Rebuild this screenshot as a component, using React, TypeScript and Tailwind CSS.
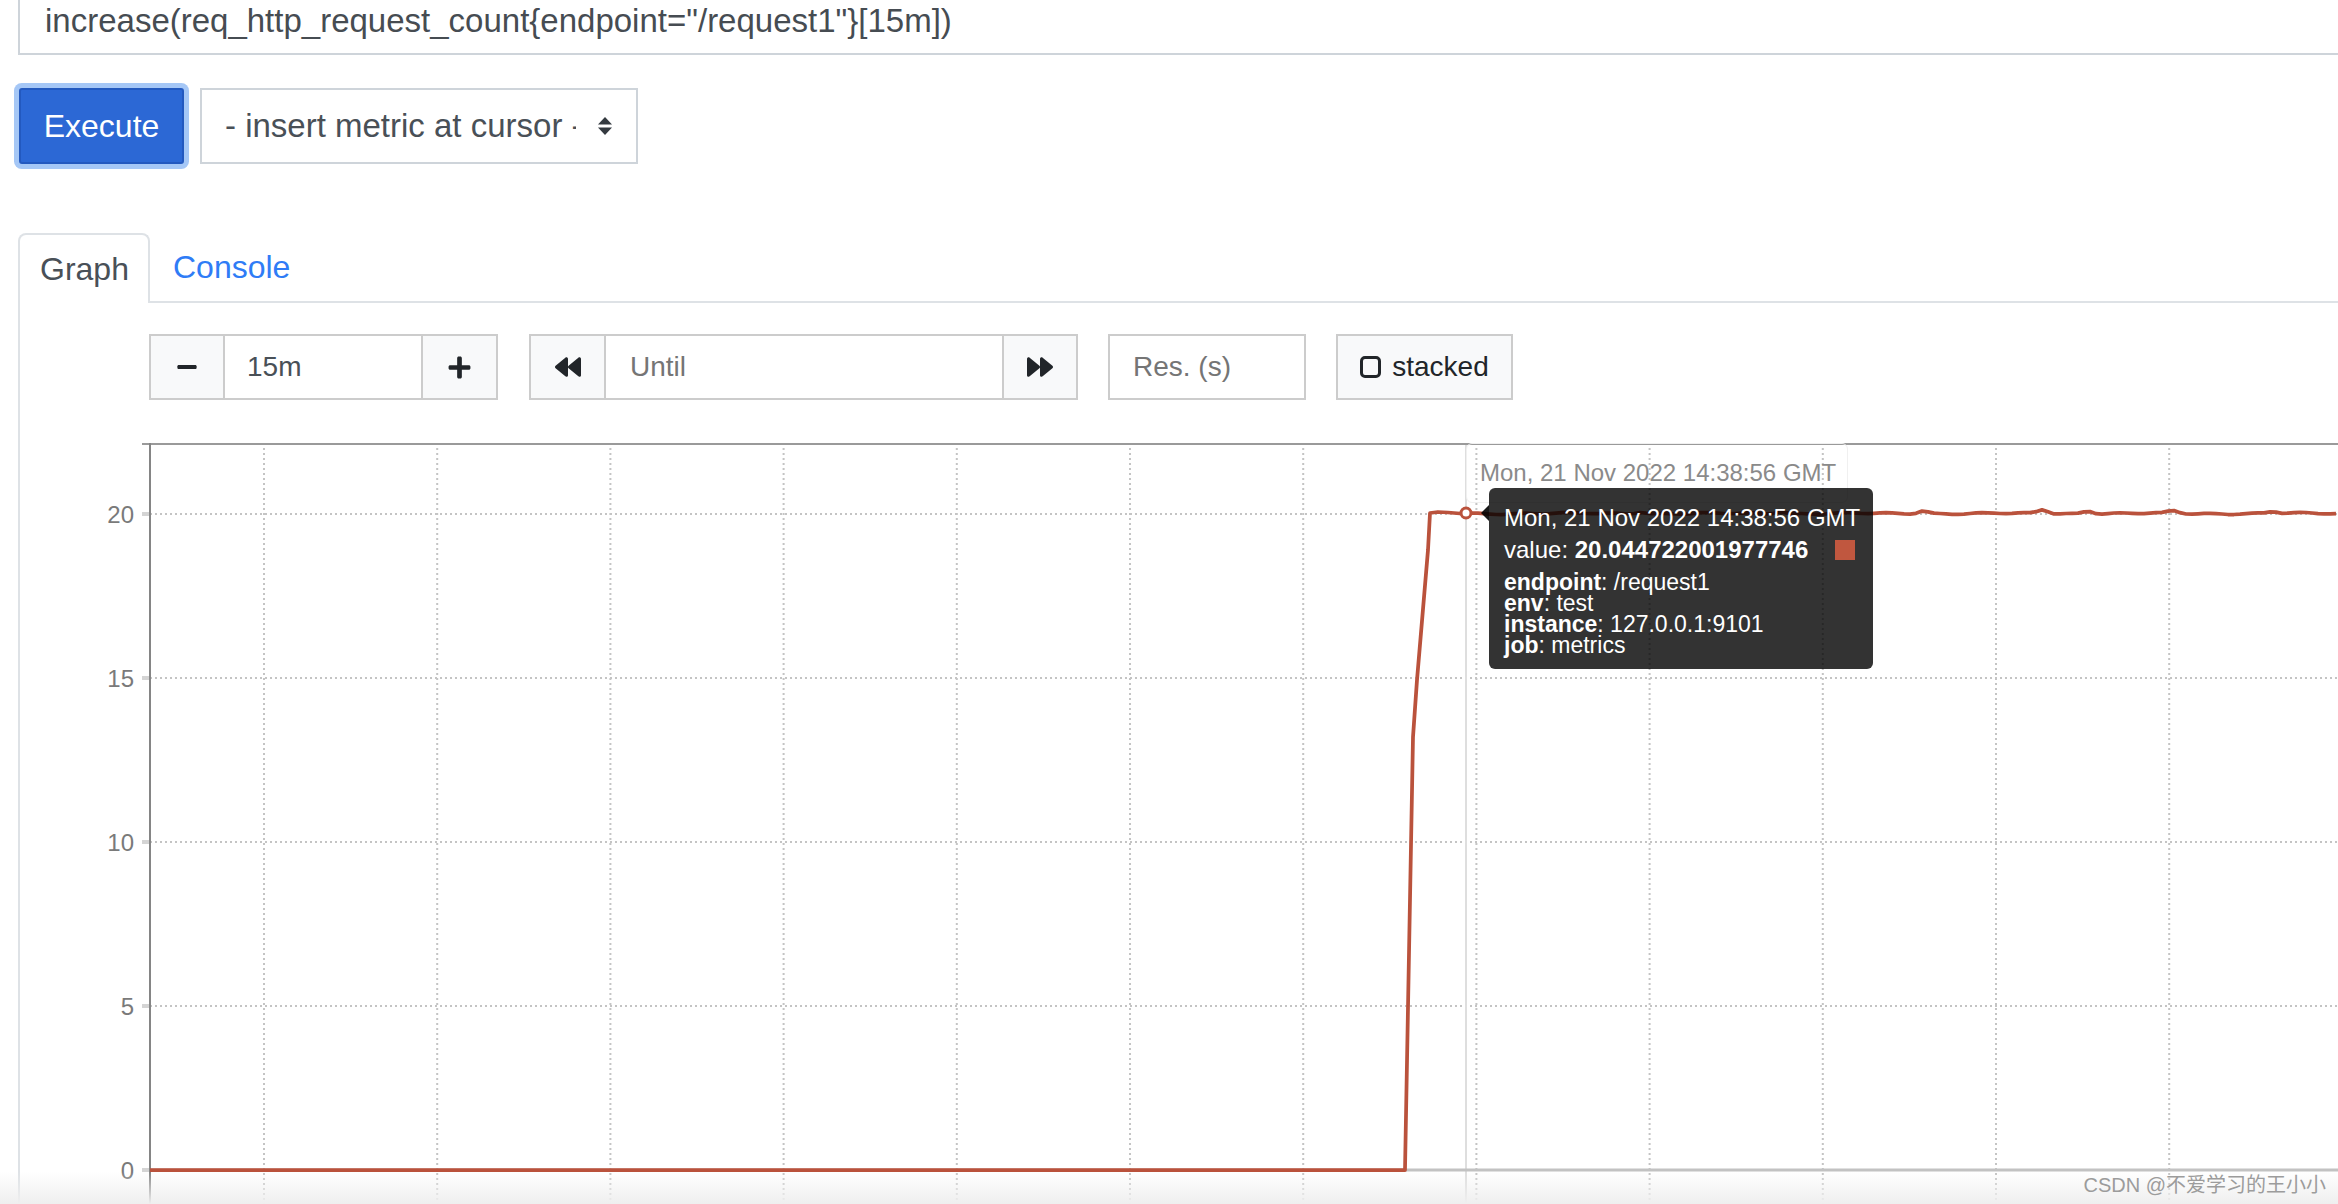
import React from "react";
import { FaMinus, FaPlus, FaBackward, FaForward } from "react-icons/fa";

const SERIES = "#ba523c";

function buildSeries(): string {
  const pts: [number, number][] = [
    [130, 727],
    [1385, 727],
    [1393, 294],
    [1397, 237],
    [1408, 107],
    [1410, 70],
    [1418, 69],
    [1428, 69.5],
    [1440, 70.5],
    [1446, 70],
  ];
  const bumps: [number, number][] = [
    [1903, 3],
    [2023, 4],
    [2068, 3],
    [2153, 2.5],
    [2253, 2],
    [1620, 2],
    [1760, 2.5],
  ];
  for (let x = 1452; x <= 2320; x += 6) {
    let y = 70.5 + Math.sin(x / 7.3) * 0.6 + Math.sin(x / 23) * 0.5;
    for (const [bx, a] of bumps) {
      y -= a * Math.exp(-Math.pow((x - bx) / 7, 2));
    }
    pts.push([x, Math.round(y * 10) / 10]);
  }
  return pts.map(([x, y], i) => `${i === 0 ? "M" : "L"}${x} ${y}`).join(" ");
}

function Chart() {
  const vx = Array.from({ length: 12 }, (_, k) => 244 + 173.2 * k);
  const ticks: [string, number][] = [
    ["20", 71],
    ["15", 235],
    ["10", 399],
    ["5", 563],
    ["0", 727],
  ];
  const d = buildSeries();
  return (
    <svg width={2318} height={761} className="block">
      {vx.map((x) => (
        <line key={x} x1={x} x2={x} y1={0} y2={761} stroke="#c4c4c4" strokeWidth={2} strokeDasharray="2 3" />
      ))}
      {ticks.slice(0, 4).map(([, y]) => (
        <line key={y} x1={130} x2={2318} y1={y} y2={y} stroke="#c4c4c4" strokeWidth={2} strokeDasharray="2 3" />
      ))}
      <line x1={1446} x2={1446} y1={0} y2={761} stroke="#dedede" strokeWidth={2} />
      <line x1={130} x2={2318} y1={727} y2={727} stroke="#c2c2c2" strokeWidth={3} />
      <line x1={122} x2={2318} y1={1} y2={1} stroke="#9a9a9a" strokeWidth={2} />
      <line x1={130} x2={130} y1={0} y2={761} stroke="#858585" strokeWidth={2} />
      {ticks.map(([t, y]) => (
        <g key={t}>
          <line x1={122} x2={129} y1={y} y2={y} stroke="#d4d4d4" strokeWidth={4} />
          <text x={114} y={y} textAnchor="end" dominantBaseline="central" fontSize={24} fill="#7a7a7a">
            {t}
          </text>
        </g>
      ))}
      <path d={d} fill="none" stroke={SERIES} strokeWidth={3.75} strokeLinejoin="round" />
      <circle cx={1446} cy={70} r={5} fill="#ffffff" stroke={SERIES} strokeWidth={3} />
    </svg>
  );
}

function SelectArrows() {
  return (
    <svg width={16} height={20} viewBox="0 0 16 20" className="shrink-0">
      <polygon points="1,8.5 8,1 15,8.5" fill="#343a40" />
      <polygon points="1,11.5 15,11.5 8,19" fill="#343a40" />
    </svg>
  );
}

export default function App() {
  return (
    <div className="relative w-[2338px] h-[1204px] overflow-hidden bg-white flex flex-col font-['Liberation_Sans','Noto_Sans_CJK_SC',sans-serif]">
      {/* query box */}
      <div className="shrink-0 h-[55px] ml-[18px] border-l-2 border-b-2 border-[#ced4da] pl-[25px] text-[33px] leading-[42px] text-[#464c52] whitespace-nowrap">
        increase(req_http_request_count{"{"}endpoint="/request1"{"}"}[15m])
      </div>

      {/* execute row */}
      <div className="shrink-0 mt-[33px] ml-[19px] flex items-center gap-[16px]">
        <button className="h-[76px] w-[165px] bg-[#2c68d5] border-2 border-[#2359bf] text-white text-[32px] rounded-[3px] ring-[5px] ring-[#a5c7f6] flex items-center justify-center">
          Execute
        </button>
        <div className="h-[76px] w-[438px] border-2 border-[#ced4da] flex items-center pl-[23px]">
          <span className="w-[351px] overflow-hidden whitespace-nowrap text-[33px] text-[#495057] leading-[40px]">
            - insert metric at cursor -
          </span>
          <div className="ml-[21px]">
            <SelectArrows />
          </div>
        </div>
      </div>

      {/* tabs */}
      <div className="shrink-0 mt-[69px] ml-[18px] flex h-[70px]">
        <div className="w-[132px] h-[70px] border-2 border-b-0 border-[#dee2e6] rounded-t-[8px] pl-[20px] flex items-center text-[32px] text-[#495057]">
          Graph
        </div>
        <div className="flex-1 border-b-2 border-[#dee2e6] flex items-center pl-[23px] text-[32px] text-[#2f7cf6]">
          Console
        </div>
      </div>

      {/* tab panel */}
      <div className="flex-1 min-h-0 ml-[18px] border-l-2 border-[#dee2e6] flex flex-col">
        {/* controls */}
        <div className="shrink-0 mt-[31px] pl-[129px] flex h-[66px] text-[28px]">
          <div className="h-[66px] w-[76px] bg-[#f8f9fa] border-2 border-[#cccccc] flex items-center justify-center text-[#212529]">
            <FaMinus size={22} />
          </div>
          <div className="-ml-[2px] h-[66px] w-[200px] border-2 border-[#cccccc] pl-[22px] flex items-center text-[#495057]">
            15m
          </div>
          <div className="-ml-[2px] h-[66px] w-[77px] bg-[#f8f9fa] border-2 border-[#cccccc] flex items-center justify-center text-[#212529]">
            <FaPlus size={25} />
          </div>

          <div className="ml-[31px] h-[66px] w-[77px] bg-[#f8f9fa] border-2 border-[#cccccc] flex items-center justify-center text-[#212529]">
            <FaBackward size={26} />
          </div>
          <div className="-ml-[2px] h-[66px] w-[400px] border-2 border-[#cccccc] pl-[24px] flex items-center text-[#757575]">
            Until
          </div>
          <div className="-ml-[2px] h-[66px] w-[76px] bg-[#f8f9fa] border-2 border-[#cccccc] flex items-center justify-center text-[#212529]">
            <FaForward size={26} />
          </div>

          <div className="ml-[30px] h-[66px] w-[198px] border-2 border-[#cccccc] pl-[23px] flex items-center text-[#757575]">
            Res. (s)
          </div>

          <div className="ml-[30px] h-[66px] w-[177px] bg-[#f8f9fa] border-2 border-[#cccccc] flex items-center justify-center gap-[11px] text-[#212529]">
            <span className="w-[21px] h-[22px] border-[3.5px] border-[#212529] rounded-[5px]" />
            <span>stacked</span>
          </div>
        </div>

        {/* graph */}
        <div className="relative mt-[43px] flex-1 min-h-0">
          <Chart />

          {/* hover date label */}
          <div className="absolute left-[1446px] top-0 w-[382px] h-[60px] border border-[#f0f0f0] rounded-[6px] flex items-center pl-[13px] text-[24px] text-[#8a8a8a] whitespace-nowrap">
            Mon, 21 Nov 2022 14:38:56 GMT
          </div>

          {/* tooltip */}
          <div className="absolute left-[1469px] top-[45px] w-[384px] h-[181px] bg-black/80 rounded-[6px] text-white text-[24px] pl-[15px] pr-[18px] pt-[14px]">
            <div className="absolute -left-[8px] top-[17px] w-0 h-0 border-y-[8px] border-y-transparent border-r-[8px] border-r-black/90" />
            <div className="leading-[32px] whitespace-nowrap">Mon, 21 Nov 2022 14:38:56 GMT</div>
            <div className="leading-[32px] flex items-center justify-between whitespace-nowrap">
              <span>
                value: <b>20.044722001977746</b>
              </span>
              <span className="w-[20px] h-[20px] bg-[#c0573f]" />
            </div>
            <div className="mt-[6px] text-[23px] leading-[21px] whitespace-nowrap">
              <div>
                <b>endpoint</b>: /request1
              </div>
              <div>
                <b>env</b>: test
              </div>
              <div>
                <b>instance</b>: 127.0.0.1:9101
              </div>
              <div>
                <b>job</b>: metrics
              </div>
            </div>
          </div>
        </div>
      </div>

      {/* bottom shading */}
      <div className="pointer-events-none absolute left-0 right-0 bottom-0 h-[32px] bg-linear-to-b from-white/0 to-[#efefef]" />

      {/* watermark */}
      <div className="absolute right-[12px] bottom-[7px] text-[20px] leading-[24px] text-[#9c9c9c] whitespace-nowrap">
        CSDN @不爱学习的王小小
      </div>
    </div>
  );
}
